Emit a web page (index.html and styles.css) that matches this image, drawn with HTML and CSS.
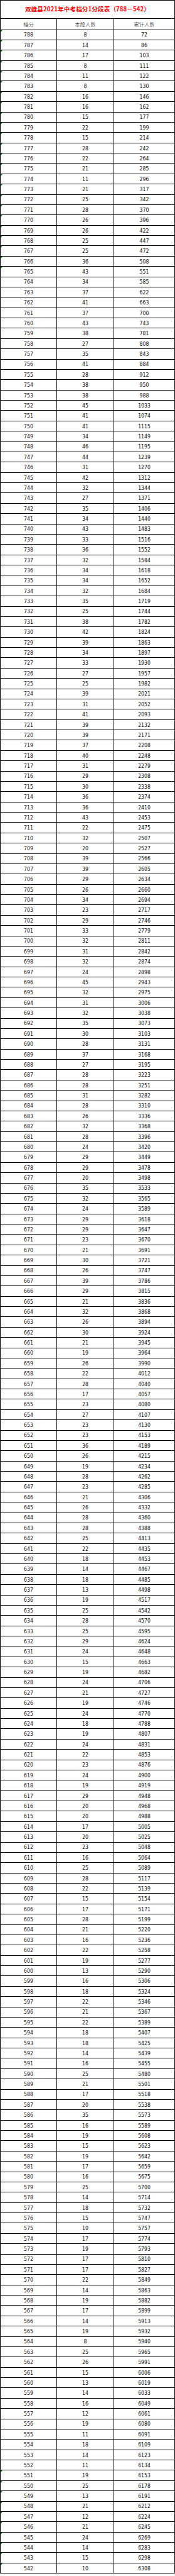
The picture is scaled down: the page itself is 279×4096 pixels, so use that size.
FILE: index.html
```html
<!DOCTYPE html>
<html lang="zh-CN">
<head>
<meta charset="utf-8">
<title>双峰县2021年中考档分1分段表</title>
<link rel="stylesheet" href="styles.css">
</head>
<body>
<div class="sheet">
<div class="title">双峰县2021年中考档分1分段表（788－542）</div>
<div class="row head"><span>档分</span><span>本段人数</span><span>累计人数</span></div>
<div class="row f"><span>788</span><span>8</span><span>72</span></div>
<div class="row f"><span>787</span><span>14</span><span>86</span></div>
<div class="row f"><span>786</span><span>17</span><span>103</span></div>
<div class="row f"><span>785</span><span>8</span><span>111</span></div>
<div class="row f"><span>784</span><span>11</span><span>122</span></div>
<div class="row f"><span>783</span><span>8</span><span>130</span></div>
<div class="row f"><span>782</span><span>16</span><span>146</span></div>
<div class="row f"><span>781</span><span>16</span><span>162</span></div>
<div class="row f"><span>780</span><span>15</span><span>177</span></div>
<div class="row f"><span>779</span><span>22</span><span>199</span></div>
<div class="row f"><span>778</span><span>15</span><span>214</span></div>
<div class="row f"><span>777</span><span>28</span><span>242</span></div>
<div class="row f"><span>776</span><span>22</span><span>264</span></div>
<div class="row f"><span>775</span><span>21</span><span>285</span></div>
<div class="row f"><span>774</span><span>11</span><span>296</span></div>
<div class="row f"><span>773</span><span>21</span><span>317</span></div>
<div class="row f"><span>772</span><span>25</span><span>342</span></div>
<div class="row f"><span>771</span><span>28</span><span>370</span></div>
<div class="row f"><span>770</span><span>26</span><span>396</span></div>
<div class="row f"><span>769</span><span>26</span><span>422</span></div>
<div class="row f"><span>768</span><span>25</span><span>447</span></div>
<div class="row f"><span>767</span><span>25</span><span>472</span></div>
<div class="row f"><span>766</span><span>36</span><span>508</span></div>
<div class="row f"><span>765</span><span>43</span><span>551</span></div>
<div class="row"><span>764</span><span>34</span><span>585</span></div>
<div class="row"><span>763</span><span>37</span><span>622</span></div>
<div class="row"><span>762</span><span>41</span><span>663</span></div>
<div class="row"><span>761</span><span>37</span><span>700</span></div>
<div class="row"><span>760</span><span>43</span><span>743</span></div>
<div class="row"><span>759</span><span>38</span><span>781</span></div>
<div class="row"><span>758</span><span>27</span><span>808</span></div>
<div class="row"><span>757</span><span>35</span><span>843</span></div>
<div class="row"><span>756</span><span>41</span><span>884</span></div>
<div class="row"><span>755</span><span>28</span><span>912</span></div>
<div class="row"><span>754</span><span>38</span><span>950</span></div>
<div class="row"><span>753</span><span>38</span><span>988</span></div>
<div class="row"><span>752</span><span>45</span><span>1033</span></div>
<div class="row"><span>751</span><span>41</span><span>1074</span></div>
<div class="row"><span>750</span><span>41</span><span>1115</span></div>
<div class="row"><span>749</span><span>34</span><span>1149</span></div>
<div class="row"><span>748</span><span>46</span><span>1195</span></div>
<div class="row"><span>747</span><span>44</span><span>1239</span></div>
<div class="row"><span>746</span><span>31</span><span>1270</span></div>
<div class="row"><span>745</span><span>42</span><span>1312</span></div>
<div class="row"><span>744</span><span>32</span><span>1344</span></div>
<div class="row"><span>743</span><span>27</span><span>1371</span></div>
<div class="row"><span>742</span><span>35</span><span>1406</span></div>
<div class="row"><span>741</span><span>34</span><span>1440</span></div>
<div class="row"><span>740</span><span>43</span><span>1483</span></div>
<div class="row"><span>739</span><span>33</span><span>1516</span></div>
<div class="row"><span>738</span><span>36</span><span>1552</span></div>
<div class="row"><span>737</span><span>32</span><span>1584</span></div>
<div class="row"><span>736</span><span>34</span><span>1618</span></div>
<div class="row"><span>735</span><span>34</span><span>1652</span></div>
<div class="row"><span>734</span><span>32</span><span>1684</span></div>
<div class="row"><span>733</span><span>35</span><span>1719</span></div>
<div class="row"><span>732</span><span>25</span><span>1744</span></div>
<div class="row"><span>731</span><span>38</span><span>1782</span></div>
<div class="row"><span>730</span><span>42</span><span>1824</span></div>
<div class="row"><span>729</span><span>39</span><span>1863</span></div>
<div class="row"><span>728</span><span>34</span><span>1897</span></div>
<div class="row"><span>727</span><span>33</span><span>1930</span></div>
<div class="row"><span>726</span><span>27</span><span>1957</span></div>
<div class="row"><span>725</span><span>25</span><span>1982</span></div>
<div class="row"><span>724</span><span>39</span><span>2021</span></div>
<div class="row"><span>723</span><span>31</span><span>2052</span></div>
<div class="row"><span>722</span><span>41</span><span>2093</span></div>
<div class="row"><span>721</span><span>39</span><span>2132</span></div>
<div class="row"><span>720</span><span>39</span><span>2171</span></div>
<div class="row"><span>719</span><span>37</span><span>2208</span></div>
<div class="row"><span>718</span><span>40</span><span>2248</span></div>
<div class="row"><span>717</span><span>31</span><span>2279</span></div>
<div class="row"><span>716</span><span>29</span><span>2308</span></div>
<div class="row"><span>715</span><span>30</span><span>2338</span></div>
<div class="row"><span>714</span><span>36</span><span>2374</span></div>
<div class="row"><span>713</span><span>36</span><span>2410</span></div>
<div class="row"><span>712</span><span>43</span><span>2453</span></div>
<div class="row"><span>711</span><span>22</span><span>2475</span></div>
<div class="row"><span>710</span><span>32</span><span>2507</span></div>
<div class="row"><span>709</span><span>20</span><span>2527</span></div>
<div class="row"><span>708</span><span>39</span><span>2566</span></div>
<div class="row"><span>707</span><span>39</span><span>2605</span></div>
<div class="row"><span>706</span><span>29</span><span>2634</span></div>
<div class="row"><span>705</span><span>26</span><span>2660</span></div>
<div class="row"><span>704</span><span>34</span><span>2694</span></div>
<div class="row"><span>703</span><span>23</span><span>2717</span></div>
<div class="row"><span>702</span><span>29</span><span>2746</span></div>
<div class="row"><span>701</span><span>33</span><span>2779</span></div>
<div class="row"><span>700</span><span>32</span><span>2811</span></div>
<div class="row"><span>699</span><span>31</span><span>2842</span></div>
<div class="row"><span>698</span><span>32</span><span>2874</span></div>
<div class="row"><span>697</span><span>24</span><span>2898</span></div>
<div class="row"><span>696</span><span>45</span><span>2943</span></div>
<div class="row"><span>695</span><span>32</span><span>2975</span></div>
<div class="row"><span>694</span><span>31</span><span>3006</span></div>
<div class="row"><span>693</span><span>32</span><span>3038</span></div>
<div class="row"><span>692</span><span>35</span><span>3073</span></div>
<div class="row"><span>691</span><span>30</span><span>3103</span></div>
<div class="row"><span>690</span><span>28</span><span>3131</span></div>
<div class="row"><span>689</span><span>37</span><span>3168</span></div>
<div class="row"><span>688</span><span>27</span><span>3195</span></div>
<div class="row"><span>687</span><span>28</span><span>3223</span></div>
<div class="row"><span>686</span><span>28</span><span>3251</span></div>
<div class="row"><span>685</span><span>31</span><span>3282</span></div>
<div class="row"><span>684</span><span>28</span><span>3310</span></div>
<div class="row"><span>683</span><span>26</span><span>3336</span></div>
<div class="row"><span>682</span><span>32</span><span>3368</span></div>
<div class="row"><span>681</span><span>28</span><span>3396</span></div>
<div class="row"><span>680</span><span>24</span><span>3420</span></div>
<div class="row"><span>679</span><span>29</span><span>3449</span></div>
<div class="row"><span>678</span><span>29</span><span>3478</span></div>
<div class="row"><span>677</span><span>20</span><span>3498</span></div>
<div class="row"><span>676</span><span>35</span><span>3533</span></div>
<div class="row"><span>675</span><span>32</span><span>3565</span></div>
<div class="row"><span>674</span><span>24</span><span>3589</span></div>
<div class="row"><span>673</span><span>29</span><span>3618</span></div>
<div class="row"><span>672</span><span>29</span><span>3647</span></div>
<div class="row"><span>671</span><span>23</span><span>3670</span></div>
<div class="row"><span>670</span><span>21</span><span>3691</span></div>
<div class="row"><span>669</span><span>30</span><span>3721</span></div>
<div class="row"><span>668</span><span>26</span><span>3747</span></div>
<div class="row"><span>667</span><span>39</span><span>3786</span></div>
<div class="row"><span>666</span><span>29</span><span>3815</span></div>
<div class="row"><span>665</span><span>21</span><span>3836</span></div>
<div class="row"><span>664</span><span>32</span><span>3868</span></div>
<div class="row"><span>663</span><span>26</span><span>3894</span></div>
<div class="row"><span>662</span><span>30</span><span>3924</span></div>
<div class="row"><span>661</span><span>21</span><span>3945</span></div>
<div class="row"><span>660</span><span>19</span><span>3964</span></div>
<div class="row"><span>659</span><span>26</span><span>3990</span></div>
<div class="row"><span>658</span><span>22</span><span>4012</span></div>
<div class="row"><span>657</span><span>28</span><span>4040</span></div>
<div class="row"><span>656</span><span>17</span><span>4057</span></div>
<div class="row"><span>655</span><span>23</span><span>4080</span></div>
<div class="row"><span>654</span><span>27</span><span>4107</span></div>
<div class="row"><span>653</span><span>23</span><span>4130</span></div>
<div class="row"><span>652</span><span>23</span><span>4153</span></div>
<div class="row"><span>651</span><span>36</span><span>4189</span></div>
<div class="row"><span>650</span><span>26</span><span>4215</span></div>
<div class="row"><span>649</span><span>19</span><span>4234</span></div>
<div class="row"><span>648</span><span>28</span><span>4262</span></div>
<div class="row"><span>647</span><span>23</span><span>4285</span></div>
<div class="row"><span>646</span><span>21</span><span>4306</span></div>
<div class="row"><span>645</span><span>26</span><span>4332</span></div>
<div class="row"><span>644</span><span>28</span><span>4360</span></div>
<div class="row"><span>643</span><span>28</span><span>4388</span></div>
<div class="row"><span>642</span><span>25</span><span>4413</span></div>
<div class="row"><span>641</span><span>22</span><span>4435</span></div>
<div class="row"><span>640</span><span>18</span><span>4453</span></div>
<div class="row"><span>639</span><span>14</span><span>4467</span></div>
<div class="row"><span>638</span><span>18</span><span>4485</span></div>
<div class="row"><span>637</span><span>13</span><span>4498</span></div>
<div class="row"><span>636</span><span>19</span><span>4517</span></div>
<div class="row"><span>635</span><span>25</span><span>4542</span></div>
<div class="row"><span>634</span><span>28</span><span>4570</span></div>
<div class="row"><span>633</span><span>25</span><span>4595</span></div>
<div class="row"><span>632</span><span>29</span><span>4624</span></div>
<div class="row"><span>631</span><span>24</span><span>4648</span></div>
<div class="row"><span>630</span><span>15</span><span>4663</span></div>
<div class="row"><span>629</span><span>19</span><span>4682</span></div>
<div class="row"><span>628</span><span>24</span><span>4706</span></div>
<div class="row"><span>627</span><span>21</span><span>4727</span></div>
<div class="row"><span>626</span><span>19</span><span>4746</span></div>
<div class="row"><span>625</span><span>24</span><span>4770</span></div>
<div class="row"><span>624</span><span>18</span><span>4788</span></div>
<div class="row"><span>623</span><span>19</span><span>4807</span></div>
<div class="row"><span>622</span><span>24</span><span>4831</span></div>
<div class="row"><span>621</span><span>22</span><span>4853</span></div>
<div class="row"><span>620</span><span>23</span><span>4876</span></div>
<div class="row"><span>619</span><span>24</span><span>4900</span></div>
<div class="row"><span>618</span><span>19</span><span>4919</span></div>
<div class="row"><span>617</span><span>29</span><span>4948</span></div>
<div class="row"><span>616</span><span>20</span><span>4968</span></div>
<div class="row"><span>615</span><span>20</span><span>4988</span></div>
<div class="row"><span>614</span><span>17</span><span>5005</span></div>
<div class="row"><span>613</span><span>20</span><span>5025</span></div>
<div class="row"><span>612</span><span>23</span><span>5048</span></div>
<div class="row"><span>611</span><span>16</span><span>5064</span></div>
<div class="row"><span>610</span><span>25</span><span>5089</span></div>
<div class="row"><span>609</span><span>28</span><span>5117</span></div>
<div class="row"><span>608</span><span>22</span><span>5139</span></div>
<div class="row"><span>607</span><span>15</span><span>5154</span></div>
<div class="row"><span>606</span><span>17</span><span>5171</span></div>
<div class="row"><span>605</span><span>28</span><span>5199</span></div>
<div class="row"><span>604</span><span>21</span><span>5220</span></div>
<div class="row"><span>603</span><span>16</span><span>5236</span></div>
<div class="row"><span>602</span><span>22</span><span>5258</span></div>
<div class="row"><span>601</span><span>19</span><span>5277</span></div>
<div class="row"><span>600</span><span>13</span><span>5290</span></div>
<div class="row"><span>599</span><span>16</span><span>5306</span></div>
<div class="row"><span>598</span><span>18</span><span>5324</span></div>
<div class="row"><span>597</span><span>22</span><span>5346</span></div>
<div class="row"><span>596</span><span>21</span><span>5367</span></div>
<div class="row"><span>595</span><span>22</span><span>5389</span></div>
<div class="row"><span>594</span><span>18</span><span>5407</span></div>
<div class="row"><span>593</span><span>18</span><span>5425</span></div>
<div class="row"><span>592</span><span>14</span><span>5439</span></div>
<div class="row"><span>591</span><span>16</span><span>5455</span></div>
<div class="row"><span>590</span><span>25</span><span>5480</span></div>
<div class="row"><span>589</span><span>21</span><span>5501</span></div>
<div class="row"><span>588</span><span>17</span><span>5518</span></div>
<div class="row"><span>587</span><span>20</span><span>5538</span></div>
<div class="row"><span>586</span><span>35</span><span>5573</span></div>
<div class="row"><span>585</span><span>16</span><span>5589</span></div>
<div class="row"><span>584</span><span>19</span><span>5608</span></div>
<div class="row"><span>583</span><span>15</span><span>5623</span></div>
<div class="row"><span>582</span><span>19</span><span>5642</span></div>
<div class="row"><span>581</span><span>17</span><span>5659</span></div>
<div class="row"><span>580</span><span>16</span><span>5675</span></div>
<div class="row"><span>579</span><span>25</span><span>5700</span></div>
<div class="row"><span>578</span><span>14</span><span>5714</span></div>
<div class="row"><span>577</span><span>18</span><span>5732</span></div>
<div class="row"><span>576</span><span>15</span><span>5747</span></div>
<div class="row"><span>575</span><span>10</span><span>5757</span></div>
<div class="row"><span>574</span><span>17</span><span>5774</span></div>
<div class="row"><span>573</span><span>19</span><span>5793</span></div>
<div class="row"><span>572</span><span>17</span><span>5810</span></div>
<div class="row"><span>571</span><span>17</span><span>5827</span></div>
<div class="row"><span>570</span><span>22</span><span>5849</span></div>
<div class="row"><span>569</span><span>14</span><span>5863</span></div>
<div class="row"><span>568</span><span>19</span><span>5882</span></div>
<div class="row"><span>567</span><span>17</span><span>5899</span></div>
<div class="row"><span>566</span><span>14</span><span>5913</span></div>
<div class="row"><span>565</span><span>19</span><span>5932</span></div>
<div class="row"><span>564</span><span>8</span><span>5940</span></div>
<div class="row"><span>563</span><span>25</span><span>5965</span></div>
<div class="row"><span>562</span><span>26</span><span>5991</span></div>
<div class="row"><span>561</span><span>15</span><span>6006</span></div>
<div class="row"><span>560</span><span>13</span><span>6019</span></div>
<div class="row"><span>559</span><span>14</span><span>6033</span></div>
<div class="row"><span>558</span><span>16</span><span>6049</span></div>
<div class="row"><span>557</span><span>12</span><span>6061</span></div>
<div class="row"><span>556</span><span>19</span><span>6080</span></div>
<div class="row"><span>555</span><span>11</span><span>6091</span></div>
<div class="row"><span>554</span><span>18</span><span>6109</span></div>
<div class="row"><span>553</span><span>14</span><span>6123</span></div>
<div class="row"><span>552</span><span>11</span><span>6134</span></div>
<div class="row f"><span>551</span><span>19</span><span>6153</span></div>
<div class="row f"><span>550</span><span>25</span><span>6178</span></div>
<div class="row f"><span>549</span><span>13</span><span>6191</span></div>
<div class="row f"><span>548</span><span>21</span><span>6212</span></div>
<div class="row f"><span>547</span><span>12</span><span>6224</span></div>
<div class="row f"><span>546</span><span>21</span><span>6245</span></div>
<div class="row f"><span>545</span><span>24</span><span>6269</span></div>
<div class="row f"><span>544</span><span>14</span><span>6283</span></div>
<div class="row f"><span>543</span><span>15</span><span>6298</span></div>
<div class="row f"><span>542</span><span>10</span><span>6308</span></div>
</div>
</body>
</html>
```

FILE: styles.css
```css
* { box-sizing: border-box; }
html, body { margin: 0; padding: 0; background: #fff; }
body { width: 279px; }

.sheet {
  width: 279px;
  border-left: 1px solid #000;
  border-top: 1px solid #000;
  font-family: "DejaVu Sans Condensed", "DejaVu Sans", "Noto Sans CJK SC", sans-serif;
  color: #111;
}

.title {
  height: 29px;
  border-right: 1px solid #000;
  border-bottom: 1px solid #000;
  display: flex;
  align-items: center;
  justify-content: center;
  padding-bottom: 3px;
  font-family: "Noto Sans CJK SC", sans-serif;
  font-weight: 700;
  font-size: 9.6px;
  letter-spacing: 0.1px;
  color: #f00;
  white-space: nowrap;
}

.row {
  display: grid;
  grid-template-columns: 90px 91px 97px;
  height: 16.39px;
}

.row > span {
  position: relative;
  display: flex;
  align-items: center;
  justify-content: center;
  border-right: 1px solid #000;
  border-bottom: 1px solid #000;
  font-size: 8.6px;
  line-height: 1;
  padding-top: 1px;
}

.row.head { height: 17.5px; }

.row.head > span {
  font-family: "Noto Sans CJK SC", sans-serif;
  font-weight: 300;
  font-size: 8.4px;
  padding-top: 0;
}

.row.f > span:first-child::before {
  content: "";
  position: absolute;
  left: 0;
  top: 0;
  border-top: 3px solid #1a7f1a;
  border-right: 3px solid transparent;
}
```
